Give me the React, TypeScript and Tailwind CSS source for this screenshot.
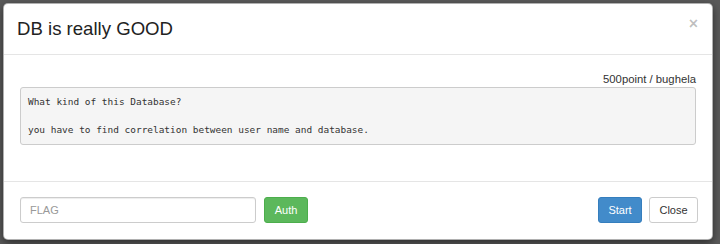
import React from "react";

export default function App() {
  return (
    <div
      className="w-[720px] h-[244px] bg-[#5a5a5a] pt-[3px] pl-[3px] overflow-hidden"
      style={{ fontFamily: '"Liberation Sans", Arial, sans-serif' }}
    >
      <div className="w-[710px] h-[237px] bg-white rounded-[5px] flex flex-col shadow-[0_3px_9px_rgba(0,0,0,0.5)] border border-[#3a3a3a]/40">
        <div className="h-[51px] border-b border-[#e5e5e5] pl-[13px] pr-[14px] flex items-center justify-between">
          <h3 className="text-[18.6px] text-[#222] leading-none">DB is really GOOD</h3>
          <span className="text-[16px] font-bold text-black/25 leading-none -mt-[10px]">×</span>
        </div>
        <div className="h-[126px] px-[16px] pt-[16px] flex flex-col">
          <div className="text-right text-[11.3px] leading-[16px] text-[#333]">500point / bughela</div>
          <pre
            className="h-[58px] bg-[#f5f5f5] border border-[#ccc] rounded-[3px] pl-[7px] pt-[7px] pb-[5px] text-[9.45px] leading-[14px] text-[#333]"
            style={{ fontFamily: '"DejaVu Sans Mono", "Liberation Mono", monospace' }}
          >{`What kind of this Database?

you have to find correlation between user name and database.`}</pre>
        </div>
        <div className="flex-1 border-t border-[#e5e5e5] pl-[16px] pr-[14px] pt-[15px] flex items-start justify-between">
          <div className="flex items-center gap-[8px]">
            <input
              placeholder="FLAG"
              className="w-[236px] h-[26px] border border-[#ccc] rounded-[3px] px-[9px] text-[11px] text-[#555] placeholder:text-[#999] outline-none shadow-[inset_0_1px_1px_rgba(0,0,0,0.075)]"
            />
            <button className="w-[44px] h-[26px] bg-[#5cb85c] border border-[#4cae4c] rounded-[3px] text-white text-[11px]">
              Auth
            </button>
          </div>
          <div className="flex items-center gap-[7px]">
            <button className="w-[44px] h-[26px] bg-[#428bca] border border-[#357ebd] rounded-[3px] text-white text-[11px]">
              Start
            </button>
            <button className="w-[49px] h-[26px] bg-white border border-[#ccc] rounded-[3px] text-[#333] text-[11px]">
              Close
            </button>
          </div>
        </div>
      </div>
    </div>
  );
}
